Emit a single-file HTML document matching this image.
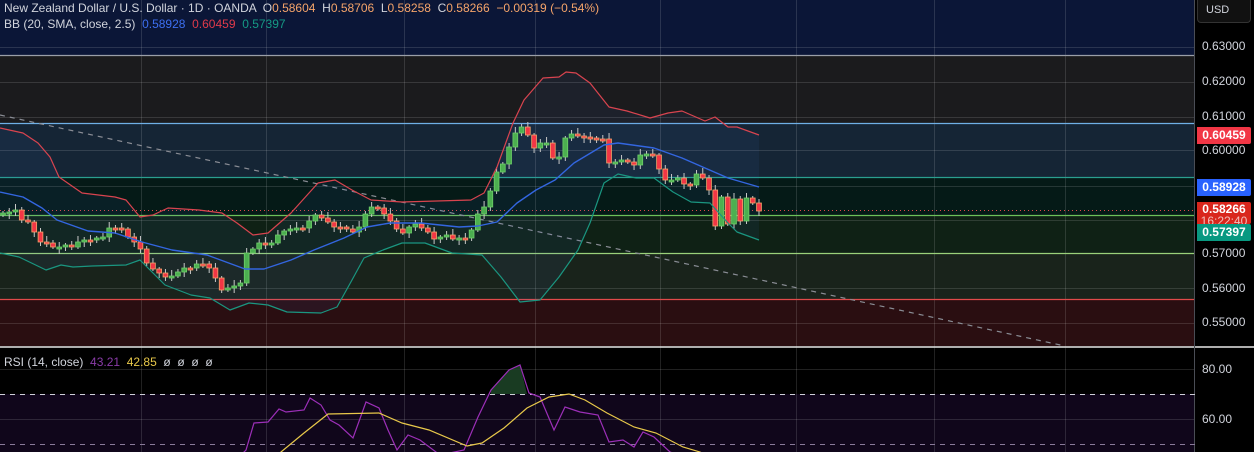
<!DOCTYPE html><html><head><meta charset="utf-8"><style>
body{margin:0;background:#000;width:1254px;height:452px;overflow:hidden;font-family:"Liberation Sans",sans-serif}
.t{position:absolute;font-size:12px;color:#d1d4dc;white-space:nowrap}
.ax{position:absolute;left:1202px;font-size:12px;color:#d1d4dc}
.lb{position:absolute;left:1197px;width:54px;color:#fff;font-size:12px;font-weight:bold;text-align:center;border-radius:0 2px 2px 0}
</style></head><body>
<svg id="s" width="1254" height="452" style="position:absolute;left:0;top:0">
<rect x="0" y="0" width="1195" height="55" fill="#0b1637"/>
<rect x="0" y="55" width="1195" height="68" fill="#1b1b1d"/>
<rect x="0" y="123" width="1195" height="54" fill="#152535"/>
<rect x="0" y="177" width="1195" height="38" fill="#051a17"/>
<rect x="0" y="215" width="1195" height="38" fill="#0f2115"/>
<rect x="0" y="253" width="1195" height="46" fill="#19231b"/>
<rect x="0" y="299" width="1195" height="47" fill="#2a0e11"/>
<rect x="0" y="348" width="1195" height="46" fill="#000"/>
<rect x="0" y="394" width="1195" height="58" fill="#10061b"/>
<g id="grid" stroke="#ffffff" stroke-opacity="0.13" stroke-width="1"></g>
<g stroke-width="1.2">
<line x1="0" y1="55.5" x2="1195" y2="55.5" stroke="#9a9ea8"/>
<line x1="0" y1="123.5" x2="1195" y2="123.5" stroke="#6fb0e6"/>
<line x1="0" y1="177.5" x2="1195" y2="177.5" stroke="#2a9f8f"/>
<line x1="0" y1="215.5" x2="1195" y2="215.5" stroke="#6cc05a"/>
<line x1="0" y1="253.5" x2="1195" y2="253.5" stroke="#9ad17a"/>
<line x1="0" y1="299.5" x2="1195" y2="299.5" stroke="#e04a4a"/>
</g>
<line x1="0" y1="210.5" x2="1195" y2="210.5" stroke="#e04a4a" stroke-dasharray="1,3"/>
<line x1="0" y1="347" x2="1254" y2="347" stroke="#e8e8e8" stroke-width="1.5"/>
<line x1="1194.5" y1="0" x2="1194.5" y2="452" stroke="#4a4d55"/>
<line x1="0" y1="394.5" x2="1195" y2="394.5" stroke="#cfcfd8" stroke-dasharray="5,5"/>
<line x1="0" y1="444.5" x2="1195" y2="444.5" stroke="#8a7a9a" stroke-dasharray="5,5"/>
<line x1="0" y1="115" x2="1065" y2="346" stroke="#8a8d95" stroke-dasharray="5,5" stroke-width="1.2"/>
<path id="fill" fill="#3a6fd8" fill-opacity="0.08"/>
<g id="cg"></g>
<polyline id="up" fill="none" stroke="#d9444f" stroke-width="1.2" stroke-linejoin="round"/>
<polyline id="mid" fill="none" stroke="#3366e0" stroke-width="1.4" stroke-linejoin="round"/>
<polyline id="lo" fill="none" stroke="#1a9680" stroke-width="1.2" stroke-linejoin="round"/>
<path d="M491,394 L491,390 509,370 520,365 527,394Z" fill="#1f4a2a" fill-opacity="0.8"/>
<polyline id="rsi" fill="none" stroke="#9c2fb8" stroke-width="1.2"/>
<polyline id="ma" fill="none" stroke="#e8c84a" stroke-width="1.2"/>
</svg>
<div class="t" style="left:4px;top:1px">New Zealand Dollar / U.S. Dollar · 1D · OANDA &nbsp;O<span style="color:#f5a46a">0.58604</span> &nbsp;H<span style="color:#f5a46a">0.58706</span> &nbsp;L<span style="color:#f5a46a">0.58258</span> &nbsp;C<span style="color:#f5a46a">0.58266</span> &nbsp;<span style="color:#f5a46a">−0.00319 (−0.54%)</span></div>
<div class="t" style="left:4px;top:17px">BB (20, SMA, close, 2.5) &nbsp;<span style="color:#3d6ff0">0.58928</span> &nbsp;<span style="color:#e03a4a">0.60459</span> &nbsp;<span style="color:#159a85">0.57397</span></div>
<div class="t" style="left:4px;top:355px">RSI (14, close) &nbsp;<span style="color:#8a3ca8">43.21</span> &nbsp;<span style="color:#e8c84a">42.85</span> &nbsp;ø &nbsp;ø &nbsp;ø &nbsp;ø</div>
<div style="position:absolute;left:1197px;top:0;width:52px;height:22px;border:1px solid #333;border-top:none;border-radius:0 0 4px 4px;background:#111"></div>
<div class="ax" style="left:1206px;top:4px;font-size:11px">USD</div>
<div class="ax" style="top:39px">0.63000</div>
<div class="ax" style="top:74px">0.62000</div>
<div class="ax" style="top:109px">0.61000</div>
<div class="ax" style="top:143px">0.60000</div>
<div class="ax" style="top:246px">0.57000</div>
<div class="ax" style="top:281px">0.56000</div>
<div class="ax" style="top:315px">0.55000</div>
<div class="ax" style="top:362px">80.00</div>
<div class="ax" style="top:412px">60.00</div>
<div class="lb" style="top:127px;height:17px;line-height:17px;background:#f23645">0.60459</div>
<div class="lb" style="top:179px;height:17px;line-height:17px;background:#2962ff">0.58928</div>
<div class="lb" style="top:202px;height:21px;background:#d9261c;line-height:12px;padding-top:1px;font-size:12px">0.58266<br><span style="font-weight:normal;color:#f3c0bc">16:22:40</span></div>
<div class="lb" style="top:224px;height:17px;line-height:17px;background:#089981">0.57397</div>
<script>
(function(){
var NS="http://www.w3.org/2000/svg";
function el(p,t,a){var e=document.createElementNS(NS,t);for(var k in a)e.setAttribute(k,a[k]);document.getElementById(p).appendChild(e);return e;}
[141,266,404,535,660,796,934,1065].forEach(function(x){el("grid","line",{x1:x+.5,y1:0,x2:x+.5,y2:452});});
[47,82,117,150,186,220,288,323,369,419].forEach(function(y){el("grid","line",{x1:0,y1:y+.5,x2:1195,y2:y+.5});});
var C=[213,212,210,220,222,232,242,243,247,247,245,247,242,240,240,238,237,228,228,229,237,242,249,263,269,273,277,276,272,268,268,264,264,268,278,290,288,286,283,253,249,243,243,243,235,231,229,228,228,221,215,218,222,227,227,229,232,227,214,207,208,214,221,229,233,227,224,228,232,239,237,235,239,238,238,230,214,207,191,172,164,147,133,127,135,148,143,143,158,157,138,134,136,137,138,139,139,163,162,160,162,165,155,154,155,169,180,180,178,184,185,174,178,190,226,197,224,199,221,198,203,211];
var n=C.length,x0=3,dx=(759-3)/(n-1),prev=C[0]+2;
for(var i=0;i<n;i++){var x=x0+i*dx,o=prev,c=C[i];var tp=Math.min(o,c),bt=Math.max(o,c);if(bt-tp<2){bt=tp+2;}
var g=c<o||(c==o&&i%2);var w=((i*7)%5)+2;
el("cg","line",{x1:x,y1:tp-w,x2:x,y2:bt+((i*3)%4)+2,stroke:"#c8c8c8","stroke-width":1});
el("cg","rect",{x:x-2.4,y:tp,width:4.8,height:bt-tp,fill:g?"#4caf50":"#f23645",stroke:g?"#6fd06a":"#f5a46a","stroke-width":0.8});
prev=c;}
var U="0,128 23,133 38,143 50,157 59,177 82,193 115,197 126,200 140,217 153,215 168,208 199,210 222,213 237,223 253,235 268,233 291,213 318,183 335,180 352,190 371,200 402,202 471,200 484,193 497,167 513,123 524,100 543,78 559,77 566,72 576,73 590,83 609,107 627,111 650,118 668,113 682,111 705,121 715,117 728,127 737,127 759,135";
var M="0,192 23,197 42,208 57,220 88,231 115,233 142,242 172,250 207,255 245,269 264,269 291,260 314,250 344,238 367,227 390,223 421,223 459,227 478,226 497,222 517,203 536,190 555,180 574,163 604,145 618,143 654,148 682,158 705,168 728,178 759,187";
var L="0,253 19,257 46,270 61,265 73,267 92,266 126,265 140,260 153,273 165,285 191,295 210,298 230,310 249,303 268,305 287,312 321,313 337,307 352,280 364,258 383,250 402,243 425,243 452,253 482,255 501,277 520,302 540,300 559,277 578,250 590,223 604,183 618,174 636,178 654,178 673,192 691,202 710,203 728,223 737,232 759,240";
document.getElementById("up").setAttribute("points",U);
document.getElementById("mid").setAttribute("points",M);
document.getElementById("lo").setAttribute("points",L);
var lr=L.split(" ").reverse().join(" L");
document.getElementById("fill").setAttribute("d","M"+U.split(" ").join(" L")+" L"+lr+"Z");
document.getElementById("rsi").setAttribute("points","0,470 238,458 246,450 254,423 268,422 279,409 286,412 304,410 310,398 321,405 330,420 339,425 353,438 366,402 379,408 388,430 397,450 408,435 420,440 440,455 464,450 478,417 491,390 509,370 520,365 529,393 540,397 554,430 565,407 580,412 598,415 609,442 623,440 634,447 643,432 654,437 670,452 720,470");
document.getElementById("ma").setAttribute("points","270,460 281,452 304,433 328,414 379,413 402,423 429,430 467,446 482,443 504,428 527,408 549,397 569,394 585,400 607,413 634,427 656,433 683,447 700,452 715,460");
})();
</script>
</body></html>
